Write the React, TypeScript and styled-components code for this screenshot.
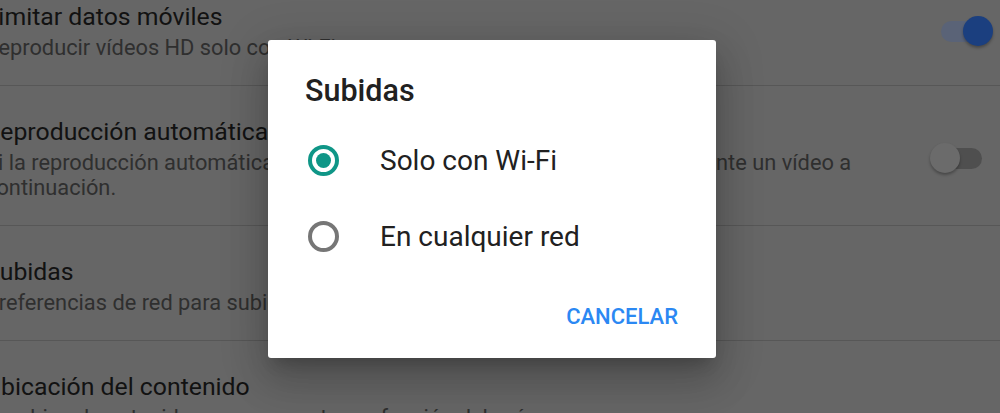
import React from 'react';
import styled, { createGlobalStyle } from 'styled-components';

const GlobalStyle = createGlobalStyle`
  html, body {
    margin: 0;
    padding: 0;
  }
  body {
    background: #666666;
    font-family: Roboto, "Noto Sans", "Liberation Sans", sans-serif;
    overflow: hidden;
  }
`;

const Screen = styled.div`
  position: relative;
  width: 1000px;
  height: 413px;
  overflow: hidden;
  background: #666666;
`;

const SettingsList = styled.div`
  margin-top: -29px;
`;

const SettingRow = styled.div`
  display: flex;
  align-items: center;
  gap: 50px;
  padding: 30px 7px 25px 0;
  border-bottom: 1px solid #575757;
`;

const TextBlock = styled.div`
  flex: 1;
  min-width: 0;
  margin-left: -15px;
`;

const Title = styled.div`
  font-size: 24.8px;
  line-height: 32px;
  color: #121212;
  white-space: nowrap;
`;

const Summary = styled.div`
  margin-top: 2px;
  font-size: 21.8px;
  line-height: 25px;
  color: #2f2f2f;
`;

const Switch = styled.div`
  position: relative;
  flex: none;
  width: 63px;
  height: 30px;
`;

const Track = styled.div<{ $on: boolean }>`
  position: absolute;
  left: 11px;
  top: 5px;
  width: 41px;
  height: 21px;
  border-radius: 11px;
  background: ${(p) => (p.$on ? '#5a6377' : '#4f4f4f')};
`;

const Thumb = styled.div<{ $on: boolean }>`
  position: absolute;
  top: 0;
  left: ${(p) => (p.$on ? '33px' : '0')};
  width: 30px;
  height: 30px;
  border-radius: 50%;
  background: ${(p) => (p.$on ? '#1b3f7f' : '#6b6b6b')};
  box-shadow: 0 2px 3px rgba(0, 0, 0, 0.3);
`;

const Dialog = styled.div`
  position: absolute;
  left: 268px;
  top: 40px;
  width: 448px;
  box-sizing: border-box;
  padding: 33px 0 18px;
  background: #ffffff;
  border-radius: 3px;
  box-shadow: 0 11px 15px -7px rgba(0, 0, 0, 0.2),
    0 24px 38px 3px rgba(0, 0, 0, 0.14), 0 9px 46px 8px rgba(0, 0, 0, 0.12);
`;

const DialogTitle = styled.h2`
  margin: 0 0 13px;
  padding-left: 37px;
  font-size: 30.5px;
  line-height: 36px;
  font-weight: 500;
  color: #212121;
`;

const RadioOption = styled.label`
  display: flex;
  align-items: center;
  gap: 41px;
  height: 76px;
  padding-left: 40px;
  font-size: 28px;
  color: #212121;
`;

const RadioMark = styled.span<{ $checked: boolean }>`
  display: flex;
  align-items: center;
  justify-content: center;
  flex: none;
  box-sizing: border-box;
  width: 31px;
  height: 31px;
  border-radius: 50%;
  border: 4px solid ${(p) => (p.$checked ? '#0f9687' : '#767676')};

  &::after {
    content: '';
    display: ${(p) => (p.$checked ? 'block' : 'none')};
    width: 15px;
    height: 15px;
    border-radius: 50%;
    background: #0f9687;
  }
`;

const Actions = styled.div`
  display: flex;
  justify-content: flex-end;
  margin-top: 18px;
  padding-right: 30px;
`;

const TextButton = styled.button`
  height: 48px;
  padding: 0 8px;
  border: none;
  background: none;
  font-family: Roboto, "Noto Sans", sans-serif;
  font-size: 22px;
  font-weight: 500;
  color: #2b88f3;
  cursor: pointer;
`;

const settings = [
  {
    title: 'Limitar datos móviles',
    summary: 'Reproducir vídeos HD solo con Wi-Fi',
    toggle: true,
  },
  {
    title: 'Reproducción automática',
    summary:
      'Si la reproducción automática está habilitada, se reproducirá automáticamente un vídeo a continuación.',
    toggle: false,
  },
  {
    title: 'Subidas',
    summary: 'Preferencias de red para subidas',
  },
  {
    title: 'Ubicación del contenido',
    summary: 'Cambiar el contenido que se muestra en función del país',
  },
];

const options = [
  { label: 'Solo con Wi-Fi', checked: true },
  { label: 'En cualquier red', checked: false },
];

export default function App() {
  return (
    <Screen>
      <GlobalStyle />
      <SettingsList>
        {settings.map((s) => (
          <SettingRow key={s.title}>
            <TextBlock>
              <Title>{s.title}</Title>
              <Summary>{s.summary}</Summary>
            </TextBlock>
            {s.toggle !== undefined && (
              <Switch>
                <Track $on={s.toggle} />
                <Thumb $on={s.toggle} />
              </Switch>
            )}
          </SettingRow>
        ))}
      </SettingsList>

      <Dialog role="dialog">
        <DialogTitle>Subidas</DialogTitle>
        {options.map((o) => (
          <RadioOption key={o.label}>
            <RadioMark $checked={o.checked} />
            {o.label}
          </RadioOption>
        ))}
        <Actions>
          <TextButton>CANCELAR</TextButton>
        </Actions>
      </Dialog>
    </Screen>
  );
}
